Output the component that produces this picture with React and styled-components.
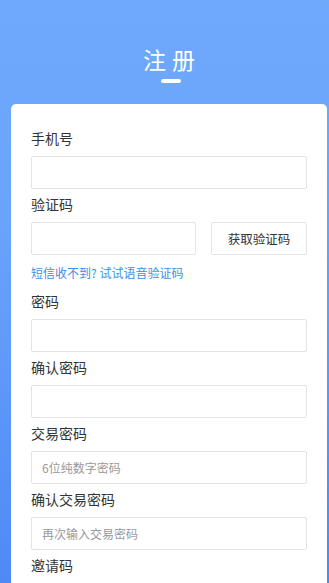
import styled, { createGlobalStyle } from 'styled-components';

const GlobalStyle = createGlobalStyle`
  * { box-sizing: border-box; }
  html, body {
    margin: 0;
    padding: 0;
    font-family: "Noto Sans CJK SC", "Noto Sans", sans-serif;
  }
  body {
    background: #4d88f6;
  }
`;

const Page = styled.div`
  min-height: 583px;
  background: linear-gradient(180deg, #6fa9fc 0%, #6aa3fb 35%, #4b85f5 100%);
  padding: 0 2px 0 11px;
  overflow: hidden;
`;

const Header = styled.header`
  height: 104px;
  display: flex;
  flex-direction: column;
  align-items: center;
  padding-top: 44px;
`;

const Title = styled.h1`
  margin: 0;
  color: #fff;
  font-size: 23px;
  font-weight: 400;
  line-height: 30px;
  letter-spacing: 6px;
  padding-left: 6px;
`;

const TitleBar = styled.span`
  display: block;
  width: 20px;
  height: 4px;
  border-radius: 2px;
  background: #fff;
  margin-top: 5px;
  margin-left: 3px;
`;

const Card = styled.div`
  background: #fff;
  border-radius: 5px 5px 0 0;
  padding: 19px 20px 20px 20px;
`;

const Label = styled.label`
  display: block;
  margin-top: 5px;
  margin-bottom: 8px;
  line-height: 20px;
  font-size: 14px;
  color: #333;
`;

const Row = styled.div`
  display: flex;
  gap: 15px;
`;

const Input = styled.input`
  display: block;
  width: ${p => (p.$narrow ? '165px' : '100%')};
  height: 33px;
  border: 1px solid #e3e3e3;
  border-radius: 2px;
  padding: 0 10px;
  font-family: inherit;
  font-size: 12px;
  color: #333;
  outline: none;
  &::placeholder {
    color: #999;
  }
`;

const CodeButton = styled.button`
  flex: 1;
  height: 33px;
  background: #fff;
  border: 1px solid #e3e3e3;
  border-radius: 2px;
  font-family: inherit;
  font-size: 12.5px;
  color: #333;
  padding: 0;
  cursor: pointer;
`;

const VoiceLink = styled.a`
  display: block;
  padding-top: 8px;
  padding-bottom: 3px;
  line-height: 20px;
  font-size: 12px;
  color: #3b8fe6;
  text-decoration: none;
`;

const fields = [
  { label: '密码', type: 'password' },
  { label: '确认密码', type: 'password' },
  { label: '交易密码', type: 'password', placeholder: '6位纯数字密码' },
  { label: '确认交易密码', type: 'password', placeholder: '再次输入交易密码' },
  { label: '邀请码', type: 'text' },
];

export default function App() {
  return (
    <>
      <GlobalStyle />
      <Page>
        <Header>
          <Title>注册</Title>
          <TitleBar />
        </Header>
        <Card>
          <Label>手机号</Label>
          <Input type="tel" />
          <Label>验证码</Label>
          <Row>
            <Input type="text" $narrow />
            <CodeButton type="button">获取验证码</CodeButton>
          </Row>
          <VoiceLink href="#">短信收不到? 试试语音验证码</VoiceLink>
          {fields.map(f => (
            <div key={f.label}>
              <Label>{f.label}</Label>
              <Input type={f.type} placeholder={f.placeholder} />
            </div>
          ))}
        </Card>
      </Page>
    </>
  );
}
